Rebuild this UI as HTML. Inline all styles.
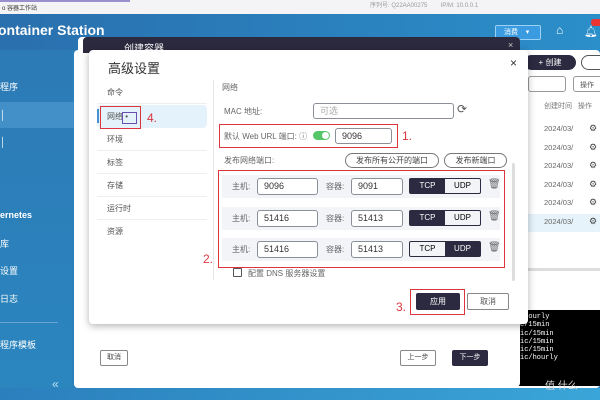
<!DOCTYPE html>
<html><head><meta charset="utf-8"><style>
*{margin:0;padding:0;box-sizing:border-box}
body{width:600px;height:400px;overflow:hidden;position:relative;font-family:"Liberation Sans","Noto Sans CJK SC",sans-serif;background:#2d7fba}
.a{position:absolute}
.t{position:absolute;white-space:nowrap}
.in{position:absolute;border:1px solid #8a8f98;border-radius:3px;background:#fff;font-size:9px;color:#333;padding-left:6px;line-height:14px}
.red{position:absolute;border:1.5px solid #d9363e}
.rn{position:absolute;color:#d9363e;font-size:12px}
.nav{position:absolute;left:97px;width:110px;font-size:8px;color:#555;padding-left:10px;border-bottom:1px solid #eee;height:23px;line-height:23px}
.row{position:absolute;left:222px;width:278px;height:23px;background:#f2f4f8}
.g{font-size:8px;color:#666}
.seg{position:absolute;width:72px;height:16px;border:1px solid #2b2a40;border-radius:2px;font-size:8px;display:flex}
.seg div{flex:1;text-align:center;line-height:14px}
.on{background:#2b2a40;color:#fff}
.pill{position:absolute;border:1px solid #777;border-radius:8px;font-size:8px;color:#444;text-align:center;line-height:13px;background:#fff}
.sb{position:absolute;left:0;color:#fff;font-size:9px}
</style></head><body>
<!-- top strip -->
<div class="a" style="left:0;top:0;width:600px;height:14px;background:#f4f4f6"></div>
<div class="a" style="left:0;top:0;width:130px;height:2px;background:#9b8fd0"></div>
<div class="t" style="left:2px;top:3px;font-size:6px;color:#333">o 容器工作站</div>
<div class="t" style="left:370px;top:0;font-size:6px;color:#999">序列号: Q22AA00275 &nbsp;&nbsp;&nbsp;&nbsp;&nbsp;&nbsp; IP/M: 10.0.0.1</div>
<!-- header -->
<div class="a" style="left:0;top:14px;width:600px;height:36px;background:linear-gradient(90deg,#2a6fae,#2b8fc9)"></div>
<div class="t" style="left:-2px;top:22px;font-size:14px;font-weight:bold;color:#fff">ontainer Station</div>
<div class="a" style="left:495px;top:25px;width:46px;height:15px;background:#3a9be0;border:1px solid #9cd0f5;border-radius:2px;font-size:7px;color:#fff;line-height:13px;padding-left:8px">消费 &nbsp;&nbsp; ▾</div>
<div class="t" style="left:556px;top:23px;font-size:12px;color:#fff">⌂</div>
<div class="t" style="left:584px;top:25px;font-size:11px;color:#fff">🔔︎</div>
<div class="a" style="left:591px;top:19px;width:12px;height:7px;background:#e33;border-radius:3px"></div>
<!-- sidebar -->
<div class="a" style="left:0;top:50px;width:72px;height:350px;background:linear-gradient(180deg,#2c7ab6,#2b86bf)"></div>
<div class="a" style="left:0;top:102px;width:74px;height:26px;background:#4390c8"></div>
<div class="sb" style="top:80px">程序</div>
<div class="sb" style="top:110px">│</div>
<div class="sb" style="top:137px">│</div>
<div class="sb" style="top:210px;font-weight:bold">ernetes</div>
<div class="sb" style="top:237px">库</div>
<div class="sb" style="top:264px">设置</div>
<div class="sb" style="top:292px">日志</div>
<div class="a" style="left:0;top:322px;width:58px;height:1px;background:#6aa5d2"></div>
<div class="sb" style="top:338px">程序模板</div>
<div class="t" style="left:52px;top:377px;font-size:12px;color:#bfe0f5">«</div>
<!-- main background panel -->
<div class="a" style="left:74px;top:50px;width:526px;height:338px;background:#fff;border-radius:4px"></div>
<div class="a" style="left:0;top:388px;width:600px;height:12px;background:linear-gradient(90deg,#2b7fbc,#3aa5d8)"></div>
<div class="a" style="left:524px;top:55px;width:52px;height:15px;background:#2b2a40;border-radius:8px;color:#fff;font-size:8px;line-height:15px;text-align:center">+ 创建</div>
<div class="a" style="left:581px;top:55px;width:30px;height:15px;border:1px solid #555;border-radius:8px"></div>
<div class="a" style="left:528px;top:76px;width:38px;height:16px;border:1px solid #999;border-radius:3px"></div>
<div class="a" style="left:573px;top:76px;width:40px;height:16px;border:1px solid #999;border-radius:3px;font-size:7px;color:#555;padding:3px 6px">操作</div>
<div class="t" style="left:544px;top:101px;font-size:7px;color:#777">创建时间 &nbsp; 操作</div>
<div class="a" style="left:528px;top:214px;width:72px;height:18px;background:#e6f3fb"></div>
<div class="t" style="left:544px;top:120px;font-size:7.5px;color:#666;line-height:18.5px">2024/03/<br>2024/03/<br>2024/03/<br>2024/03/<br>2024/03/<br>2024/03/</div>
<div class="t" style="left:589px;top:119px;font-size:9px;color:#444;line-height:18.5px">⚙<br>⚙<br>⚙<br>⚙<br>⚙<br>⚙</div>
<div class="a" style="left:528px;top:268px;width:72px;height:3px;background:#ddd"></div>
<div class="a" style="left:455px;top:310px;width:145px;height:76px;background:#000"></div>
<div class="t" style="left:520px;top:313px;font-size:7px;color:#fff;font-family:'Liberation Mono',monospace;line-height:8.3px">/hourly<br>c/15min<br>ic/15min<br>ic/15min<br>ic/15min<br>ic/hourly</div>
<div class="t" style="left:545px;top:377px;font-size:10px;color:#ddd">值 什么</div>
<!-- outer dialog -->
<div class="a" style="left:78px;top:37px;width:442px;height:350px;background:#fff;border-radius:4px"></div>
<div class="a" style="left:83px;top:37px;width:437px;height:16px;background:#2b2a3e;border-radius:4px 4px 0 0"></div>
<div class="t" style="left:124px;top:40px;font-size:10px;color:#fff">创建容器</div>
<div class="t" style="left:508px;top:40px;font-size:9px;color:#ccc">×</div>
<div class="a" style="left:100px;top:350px;width:28px;height:16px;border:1px solid #888;border-radius:2px;font-size:7px;color:#444;text-align:center;line-height:14px">取消</div>
<div class="a" style="left:400px;top:350px;width:36px;height:16px;border:1px solid #888;border-radius:2px;font-size:7px;color:#444;text-align:center;line-height:14px">上一步</div>
<div class="a" style="left:452px;top:350px;width:36px;height:16px;background:#2b2a40;border-radius:2px;font-size:7px;color:#fff;text-align:center;line-height:16px">下一步</div>
<!-- inner dialog -->
<div class="a" style="left:89px;top:50px;width:439px;height:274px;background:#fff;border-radius:4px;box-shadow:0 2px 8px rgba(0,0,0,.3)"></div>
<div class="t" style="left:108px;top:58px;font-size:13px;color:#333">高级设置</div>
<div class="t" style="left:510px;top:56px;font-size:12px;color:#333">×</div>
<div class="a" style="left:213px;top:80px;width:1px;height:200px;background:#e6e6e6"></div>
<div class="nav" style="top:81px">命令</div>
<div class="nav" style="top:105px;background:#e4f2fb;border-radius:4px;border:none">网络 •</div>
<div class="a" style="left:97px;top:109px;width:2px;height:14px;background:#4a90d0"></div>
<div class="nav" style="top:128px">环境</div>
<div class="nav" style="top:151px">标签</div>
<div class="nav" style="top:174px">存储</div>
<div class="nav" style="top:197px">运行时</div>
<div class="nav" style="top:220px;border:none">资源</div>
<div class="red" style="left:100px;top:106px;width:41px;height:23px"></div>
<div class="a" style="left:122px;top:112px;width:15px;height:12px;border:1px solid #6a4fb0"></div>
<div class="rn" style="left:147px;top:111px">4.</div>
<!-- content -->
<div class="t g" style="left:222px;top:82px">网络</div>
<div class="t g" style="left:224px;top:106px">MAC 地址:</div>
<div class="in" style="left:313px;top:103px;width:141px;height:16px;color:#aaa">可选</div>
<div class="t" style="left:457px;top:102px;font-size:12px;color:#555">⟳</div>
<div class="t g" style="left:224px;top:131px">默认 Web URL 端口: ⓘ</div>
<div class="a" style="left:313px;top:131px;width:17px;height:9px;background:#55c56a;border-radius:5px"></div>
<div class="a" style="left:322px;top:132px;width:7px;height:7px;background:#fff;border-radius:50%"></div>
<div class="in" style="left:335px;top:128px;width:57px;height:16px">9096</div>
<div class="red" style="left:219px;top:124px;width:179px;height:24px"></div>
<div class="rn" style="left:402px;top:129px">1.</div>
<div class="t g" style="left:224px;top:155px">发布网络端口:</div>
<div class="pill" style="left:345px;top:153px;width:94px;height:15px">发布所有公开的端口</div>
<div class="pill" style="left:444px;top:153px;width:63px;height:15px">发布新端口</div>
<div class="a" style="left:512px;top:163px;width:3px;height:118px;background:#ddd;border-radius:2px"></div>

<div class="row" style="top:175px"></div>
<div class="row" style="top:207px"></div>
<div class="row" style="top:238px"></div>
<div class="t g" style="left:232px;top:181px">主机:</div>
<div class="t g" style="left:232px;top:213px">主机:</div>
<div class="t g" style="left:232px;top:244px">主机:</div>
<div class="t g" style="left:326px;top:181px">容器:</div>
<div class="t g" style="left:326px;top:213px">容器:</div>
<div class="t g" style="left:326px;top:244px">容器:</div>
<div class="in" style="left:257px;top:178px;width:61px;height:17px">9096</div>
<div class="in" style="left:257px;top:210px;width:61px;height:17px">51416</div>
<div class="in" style="left:257px;top:241px;width:61px;height:17px">51416</div>
<div class="in" style="left:351px;top:178px;width:52px;height:17px">9091</div>
<div class="in" style="left:351px;top:210px;width:52px;height:17px">51413</div>
<div class="in" style="left:351px;top:241px;width:52px;height:17px">51413</div>
<div class="seg" style="left:409px;top:178px"><div class="on">TCP</div><div>UDP</div></div>
<div class="seg" style="left:409px;top:210px"><div class="on">TCP</div><div>UDP</div></div>
<div class="seg" style="left:409px;top:241px"><div>TCP</div><div class="on">UDP</div></div>
<div class="t" style="left:488px;top:179px;font-size:10px;color:#666">🗑︎</div>
<div class="t" style="left:488px;top:211px;font-size:10px;color:#666">🗑︎</div>
<div class="t" style="left:488px;top:242px;font-size:10px;color:#666">🗑︎</div>
<div class="red" style="left:218px;top:170px;width:287px;height:98px"></div>
<div class="rn" style="left:203px;top:252px">2.</div>
<div class="a" style="left:233px;top:268px;width:9px;height:9px;border:1px solid #555;border-radius:1px"></div>
<div class="t g" style="left:248px;top:268px">配置 DNS 服务器设置</div>
<div class="a" style="left:416px;top:293px;width:44px;height:17px;background:#2b2a40;border-radius:2px;color:#fff;font-size:8px;text-align:center;line-height:17px">应用</div>
<div class="a" style="left:467px;top:293px;width:42px;height:17px;border:1px solid #888;border-radius:2px;color:#555;font-size:8px;text-align:center;line-height:15px">取消</div>
<div class="red" style="left:410px;top:289px;width:55px;height:26px"></div>
<div class="rn" style="left:396px;top:300px">3.</div>
</body></html>
